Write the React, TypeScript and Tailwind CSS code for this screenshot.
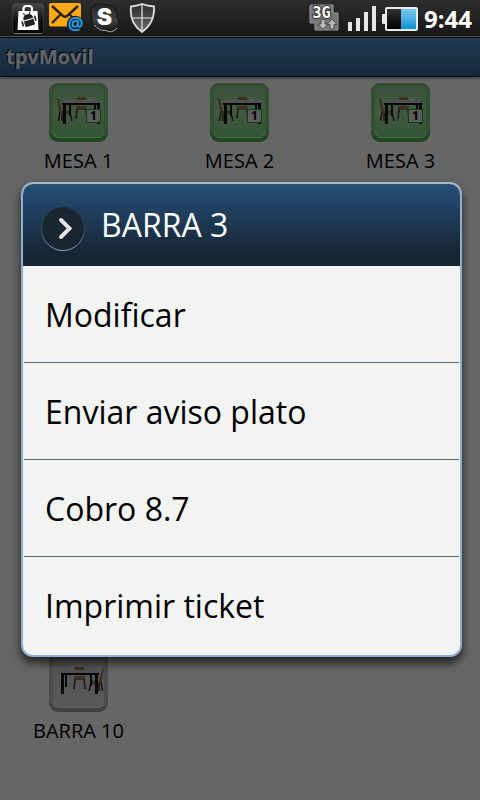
const tables = [
  { name: "MESA 1", busy: true },
  { name: "MESA 2", busy: true },
  { name: "MESA 3", busy: true },
];

const actions = ["Modificar", "Enviar aviso plato", "Cobro 8.7", "Imprimir ticket"];

const BagIcon = () => (
  <svg className="w-8 h-8 shrink-0" viewBox="0 0 32 32">
    <defs>
      <linearGradient id="bagBg" x1="0" y1="0" x2="0" y2="1">
        <stop offset="0" stopColor="#4a4a4a" />
        <stop offset=".5" stopColor="#161616" />
        <stop offset="1" stopColor="#050505" />
      </linearGradient>
    </defs>
    <rect x=".5" y=".5" width="31" height="30" rx="3" fill="url(#bagBg)" stroke="#444" strokeWidth=".6" />
    <path d="M2 30.500H30" stroke="#777" strokeWidth="1" />
    <path d="M11.500 9V6Q11.500 3 14.500 3H17Q20 3 20 6V9" fill="none" stroke="#fff" strokeWidth="2.200" />
    <path d="M6.500 8H25.500L26.500 27H5.500Z" fill="#fff" />
    <g transform="rotate(-16 17 18)">
      <path d="M12 16Q12 11 17 11Q22 11 22 16Z" fill="#222" />
      <path d="M13.500 9L15 12M20.500 9L19 12" stroke="#222" strokeWidth="1" />
      <path d="M12 17H22V22Q22 23 21 23H13Q12 23 12 22Z" fill="#222" />
      <path d="M10.200 17V21M23.800 15V19" stroke="#222" strokeWidth="1.600" strokeLinecap="round" />
    </g>
  </svg>
);

const MailIcon = () => (
  <svg className="w-9 h-8 shrink-0" viewBox="0 0 36 32">
    <rect x="0" y="0" width="32" height="23.500" rx="2" fill="#fba914" />
    <path d="M3 3L14 13Q16 14.500 18 13L29 3M3 20L11 12M29 20L21 12" fill="none" stroke="#2b2414" strokeWidth="2.400" />
    <circle cx="26.500" cy="21.500" r="8.700" fill="#1c1c1c" />
    <text x="26.500" y="27" textAnchor="middle" fontFamily="Open Sans, sans-serif" fontWeight="700" fontSize="18" fill="#1ba0ee">
      @
    </text>
  </svg>
);

const SkypeIcon = () => (
  <svg className="w-[34px] h-8 shrink-0" viewBox="0 0 34 32">
    <defs>
      <linearGradient id="skypeBg" x1="0" y1="0" x2="0" y2="1">
        <stop offset="0" stopColor="#242424" />
        <stop offset=".6" stopColor="#404040" />
        <stop offset="1" stopColor="#161616" />
      </linearGradient>
    </defs>
    <path
      d="M1 8C1 2 8-1 13 2C21 0 28 6 27 14C31 21 27 29 20 28.500C18 28.500 17 28 16 27C7 28 1 22 2 14C1 12 1 10 1 8Z"
      fill="url(#skypeBg)"
      stroke="#0c0c0c"
      strokeWidth=".8"
    />
    <path d="M4 22Q9 28 16 27.500Q22 31 27 25" fill="none" stroke="#aaa" strokeWidth="1" />
    <text x="14.500" y="22" textAnchor="middle" fontFamily="Inter, sans-serif" fontWeight="900" fontSize="23" fill="#fff">
      S
    </text>
  </svg>
);

const ShieldIcon = () => (
  <svg className="w-[27px] h-8 shrink-0" viewBox="0 0 27 32">
    <defs>
      <linearGradient id="shieldBg" x1="0" y1="0" x2="0" y2="1">
        <stop offset="0" stopColor="#2c2c2c" />
        <stop offset="1" stopColor="#6c6c6c" />
      </linearGradient>
    </defs>
    <path
      d="M2 3.500Q8 3 13 1Q18 3 25 3.500Q26 20 13 29Q0 20 2 3.500Z"
      fill="url(#shieldBg)"
      stroke="#ddd"
      strokeWidth="1.800"
    />
    <path d="M13 2V28M3 15H24" stroke="#e8e8e8" strokeWidth="1.200" />
  </svg>
);

const DataIcon = () => (
  <svg className="w-8 h-8 shrink-0" viewBox="0 0 32 32">
    <path d="M2 2H24V10H29V27H6V20H1V3Z" fill="#777" stroke="#999" strokeWidth="1" />
    <text x="12.500" y="15" textAnchor="middle" fontFamily="DejaVu Sans Mono, monospace" fontWeight="700" fontSize="15" fill="#fff" stroke="#333" strokeWidth="2" paintOrder="stroke">
      3G
    </text>
    <path
      d="M12 16.500H16V21H19L14 26.500L9 21H12ZM21 26V21.500H18L23 16L28 21.500H25V26Z"
      fill="#bbb"
      stroke="#4c4c4c"
      strokeWidth="1"
    />
  </svg>
);

const SignalIcon = () => (
  <svg className="w-[29px] h-[30px] shrink-0" viewBox="0 0 29 30">
    <path d="M1 18H5V27H1ZM9 14H13V27H9ZM17 8H21V27H17ZM25 2H29V27H25Z" fill="#e6e6e6" />
  </svg>
);

const BatteryIcon = () => (
  <svg className="w-9 h-[30px] shrink-0" viewBox="0 0 36 30">
    <defs>
      <linearGradient id="charge" x1="0" y1="0" x2="0" y2="1">
        <stop offset="0" stopColor="#7cc6ea" />
        <stop offset=".45" stopColor="#4eb1e2" />
        <stop offset="1" stopColor="#068fd2" />
      </linearGradient>
      <linearGradient id="empty" x1="0" y1="0" x2="0" y2="1">
        <stop offset="0" stopColor="#333" />
        <stop offset="1" stopColor="#000" />
      </linearGradient>
    </defs>
    <rect x="0" y="10" width="4" height="10" rx="1" fill="#e9e9e9" />
    <rect x="3" y="3" width="33" height="24" rx="2" fill="#e9e9e9" />
    <rect x="5" y="5" width="14" height="20" fill="url(#empty)" />
    <rect x="19" y="5" width="15" height="20" fill="url(#charge)" />
  </svg>
);

const TableIcon = ({ busy }: { busy: boolean }) => (
  <svg className="w-[60px] h-[60px]" viewBox="0 0 60 60">
    <defs>
      <linearGradient id="busyBg" x1="0" y1="0" x2="0" y2="1">
        <stop offset="0" stopColor="#8fcf90" />
        <stop offset=".5" stopColor="#a6dca6" />
        <stop offset="1" stopColor="#7fd67e" />
      </linearGradient>
      <linearGradient id="freeBg" x1="0" y1="0" x2="0" y2="1">
        <stop offset="0" stopColor="#cfcdcf" />
        <stop offset="1" stopColor="#e2e0e2" />
      </linearGradient>
    </defs>
    <rect x="0" y="0" width="59" height="59" rx="9" fill={busy ? "#46b844" : "#a8a5a8"} />
    <rect x="0" y="0" width="59" height="55" rx="9" fill={busy ? "#7fc67e" : "#c4c1c4"} />
    <rect x="4" y="3" width="51" height="52" rx="6" fill={busy ? "url(#busyBg)" : "url(#freeBg)"} />
    <path d="M4.500 48Q5 54.500 11 54.500H48Q54.500 54.500 54.500 48" fill="none" stroke={busy ? "#b9f5b8" : "#f4f4f4"} strokeWidth="1" />
    <g transform={busy ? undefined : "translate(63 0) scale(-1 1)"}>
      <path d="M8 15L10 16L13 28L22 27L21 31L13 32L10 28Z" fill="#9c7a50" />
      <path d="M11 29L9.500 38M13 31V38M21 30L23 38" stroke="#4a3a33" strokeWidth="1.600" fill="none" />
      <rect x="28" y="14" width="9" height="4" fill="#9c7a50" />
      <path d="M27 23H38L37 27H27Z" fill="#9c7a50" />
      <path d="M28 26L27 36M37 26L38 36" stroke="#4a3a3a" strokeWidth="1.600" />
      <path d="M17 17H48L51 20H13Z" fill="#c9cad2" />
      <circle cx="41" cy="16.500" r="2" fill="#dcdce4" />
      <path d="M13 20H51V22H13Z" fill="#111" />
      <path d="M14 21H17V41H14ZM20 22H22V33H20ZM48 22H51V41H48ZM45 22H47V34H45Z" fill="#151515" />
    </g>
    {busy && (
      <>
        <rect x="37.500" y="26.500" width="14" height="13" fill="#e6e8e6" stroke="#2f9a2f" />
        <text x="44.500" y="37" textAnchor="middle" fontFamily="Open Sans, sans-serif" fontWeight="700" fontSize="12" fill="#000">
          1
        </text>
      </>
    )}
  </svg>
);

const TableButton = ({ name, busy, className = "" }: { name: string; busy: boolean; className?: string }) => (
  <button type="button" className={`flex flex-col items-center self-start ${className}`}>
    <TableIcon busy={busy} />
    <span className="mt-1 text-xl leading-7 text-black whitespace-nowrap">{name}</span>
  </button>
);

const StatusBar = () => (
  <div className="flex h-[38px] items-center justify-between border-b border-black bg-linear-to-b from-[#2e2e2e] to-[#171717] pl-3 pr-2 shadow-[inset_0_-1px_0_#555]">
    <div className="flex items-center gap-[5px]">
      <BagIcon />
      <MailIcon />
      <SkypeIcon />
      <ShieldIcon />
    </div>
    <div className="flex items-center gap-1.5">
      <DataIcon />
      <SignalIcon />
      <BatteryIcon />
      <span className="text-2xl leading-8 font-bold text-white">9:44</span>
    </div>
  </div>
);

const ActionDialog = () => (
  <div
    role="dialog"
    aria-labelledby="dialog-title"
    className="w-full overflow-hidden rounded-xl border-2 border-[#8fb0d0] border-t-[#aab6c2] bg-[#f2f4f2] pb-0.5 shadow-[0_6px_10px_rgba(0,0,0,0.65)]"
  >
    <div className="flex h-[82px] items-center gap-4 bg-linear-to-b from-[#26507a] to-[#172635] to-85% pl-[18px]">
      <svg className="mt-2 h-11 w-11 shrink-0" viewBox="0 0 44 44">
        <defs>
          <linearGradient id="ring" x1="0" y1="0" x2="0" y2="1">
            <stop offset="0" stopColor="#1d2d3c" />
            <stop offset=".5" stopColor="#33475a" />
            <stop offset="1" stopColor="#8fa0ae" />
          </linearGradient>
        </defs>
        <circle cx="22" cy="22" r="21.500" fill="#1a2733" stroke="url(#ring)" />
        <path d="M20 13.500L28.500 22L20 30.500" fill="none" stroke="#0b131b" strokeWidth="5" strokeLinecap="round" />
        <path d="M20 13L28.500 21.500L20 30" fill="none" stroke="#e3e3e6" strokeWidth="4" strokeLinecap="round" />
      </svg>
      <h2 id="dialog-title" className="text-[32px] leading-10 text-white">
        BARRA 3
      </h2>
    </div>
    <ul className="divide-y divide-[#4f6b80] px-px">
      {actions.map((action) => (
        <li key={action}>
          <button type="button" className="flex h-24 w-full items-center pt-0.5 pl-[21px] text-left text-[32px] leading-10 text-black">
            {action}
          </button>
        </li>
      ))}
    </ul>
  </div>
);

export default function App() {
  return (
    <div className="flex min-h-screen flex-col bg-white font-['Open_Sans','Noto_Sans',sans-serif]">
      <StatusBar />
      <div className="relative flex-1">
        <header className="flex h-[39px] items-center border-b border-[#222] bg-linear-to-b from-[#5091cc] to-[#376494] px-1.5 shadow-[0_1px_3px_rgba(0,0,0,0.5)]">
          <h1 className="text-xl leading-8 font-bold text-[#fafafa] [text-shadow:-1px_-1px_1px_#000]">tpvMovil</h1>
        </header>
        <main className="grid auto-rows-[114px] grid-cols-3 gap-x-1 pt-1.5 pr-px">
          {tables.map((t) => (
            <TableButton key={t.name} name={t.name} busy={t.busy} />
          ))}
          <TableButton name="BARRA 10" busy={false} className="row-start-6" />
        </main>
        <div className="absolute inset-0 flex items-center justify-center bg-black/60 pr-[18px] pl-[21px]">
          <ActionDialog />
        </div>
      </div>
    </div>
  );
}
